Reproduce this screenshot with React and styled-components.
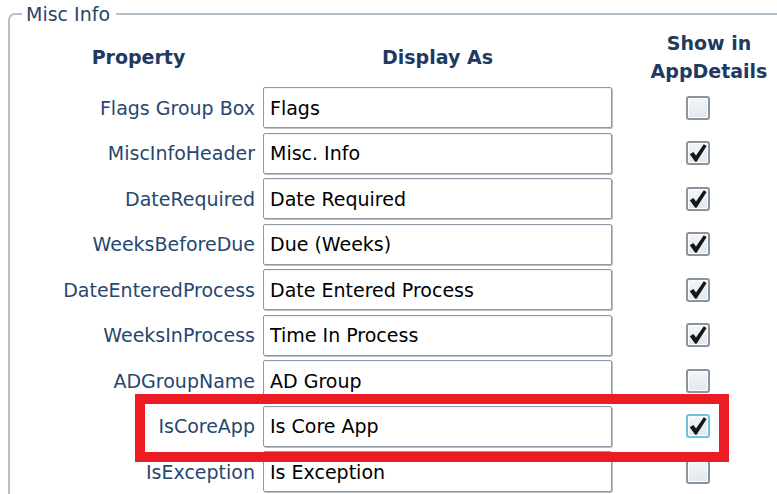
import styled, { createGlobalStyle } from 'styled-components';

const GlobalStyle = createGlobalStyle`
  html, body {
    margin: 0;
    padding: 0;
    background: #ffffff;
  }
  body {
    font-family: "DejaVu Sans", Verdana, sans-serif;
  }
`;

const rows = [
  { name: 'Flags Group Box', display: 'Flags', show: false },
  { name: 'MiscInfoHeader', display: 'Misc. Info', show: true },
  { name: 'DateRequired', display: 'Date Required', show: true },
  { name: 'WeeksBeforeDue', display: 'Due (Weeks)', show: true },
  { name: 'DateEnteredProcess', display: 'Date Entered Process', show: true },
  { name: 'WeeksInProcess', display: 'Time In Process', show: true },
  { name: 'ADGroupName', display: 'AD Group', show: false },
  { name: 'IsCoreApp', display: 'Is Core App', show: true, focused: true },
  { name: 'IsException', display: 'Is Exception', show: false },
];

function Check({ checked, focused }) {
  return (
    <Box $focused={focused}>
      {checked && (
        <svg width="20" height="20" viewBox="0 0 20 20">
          <path d="M1.8 11.2 L5.4 9 L8 12.4 L15.8 1.2 L18.6 3 L8.6 18.8 L7.2 18.8 Z" fill="#161616" />
        </svg>
      )}
    </Box>
  );
}

export default function App() {
  return (
    <>
      <GlobalStyle />
      <Page>
        <Group>
          <Legend>Misc Info</Legend>
          <Grid>
            <Head $shift={12}>Property</Head>
            <Head>Display As</Head>
            <Head $shift={22}>
              Show in
              <br />
              AppDetails
            </Head>
            {rows.map((r) => (
              <Row key={r.name}>
                <Label>{r.name}</Label>
                <TextBox readOnly value={r.display} />
                <CheckCell>
                  <Check checked={r.show} focused={r.focused} />
                </CheckCell>
              </Row>
            ))}
          </Grid>
        </Group>
        <Highlight />
      </Page>
    </>
  );
}

const Page = styled.div`
  position: relative;
  width: 777px;
  height: 494px;
  overflow: hidden;
  padding-left: 8px;
  box-sizing: border-box;
`;

const Group = styled.fieldset`
  margin: 0;
  padding: 0 0 40px 0;
  border: 2px solid #b3c0cd;
  border-radius: 7px;
  width: 800px;
  box-sizing: border-box;
  min-height: 520px;
`;

const Legend = styled.legend`
  margin-left: 12px;
  padding: 0 6px 0 4px;
  font-size: 19px;
  line-height: 28px;
  color: #2c4668;
`;

const Grid = styled.div`
  display: grid;
  grid-template-columns: 245px 349px 156px;
  column-gap: 8px;
  row-gap: 4.5px;
  grid-auto-rows: 41px;
  grid-template-rows: 51px;
  margin-top: 3.5px;
`;

const Head = styled.div`
  display: flex;
  align-items: center;
  justify-content: center;
  text-align: center;
  padding-left: ${(p) => (p.$shift || 0)}px;
  font-size: 19px;
  font-weight: bold;
  line-height: 28px;
  color: #1f3a5f;
`;

const Row = styled.div`
  display: contents;
`;

const Label = styled.div`
  display: flex;
  align-items: center;
  justify-content: flex-end;
  font-size: 19px;
  color: #274670;
  white-space: nowrap;
`;

const TextBox = styled.input`
  box-sizing: border-box;
  width: 349px;
  height: 41px;
  margin: 0;
  padding: 0 6px;
  border: 1px solid #8d99a6;
  border-radius: 2px;
  box-shadow: inset 0 1px 1px rgba(0, 0, 0, 0.06), 1px 1px 0 #b8c1ca;
  font-family: "DejaVu Sans", Verdana, sans-serif;
  font-size: 19px;
  color: #000;
  background: #fff;
  outline: none;
`;

const CheckCell = styled.div`
  display: flex;
  align-items: center;
  justify-content: center;
`;

const Box = styled.span`
  display: flex;
  align-items: center;
  justify-content: center;
  width: 24px;
  height: 24px;
  box-sizing: border-box;
  border: 2px solid ${(p) => (p.$focused ? '#6cc3dc' : '#8a949f')};
  border-radius: 3px;
  background: linear-gradient(180deg, #f3f6f9 0%, #e2e7ec 100%);
  box-shadow: inset 0 0 0 1px #ffffff;
`;

const Highlight = styled.div`
  position: absolute;
  left: 135px;
  top: 394px;
  width: 594px;
  height: 68px;
  box-sizing: border-box;
  border: 10px solid #ed1c24;
  pointer-events: none;
`;
